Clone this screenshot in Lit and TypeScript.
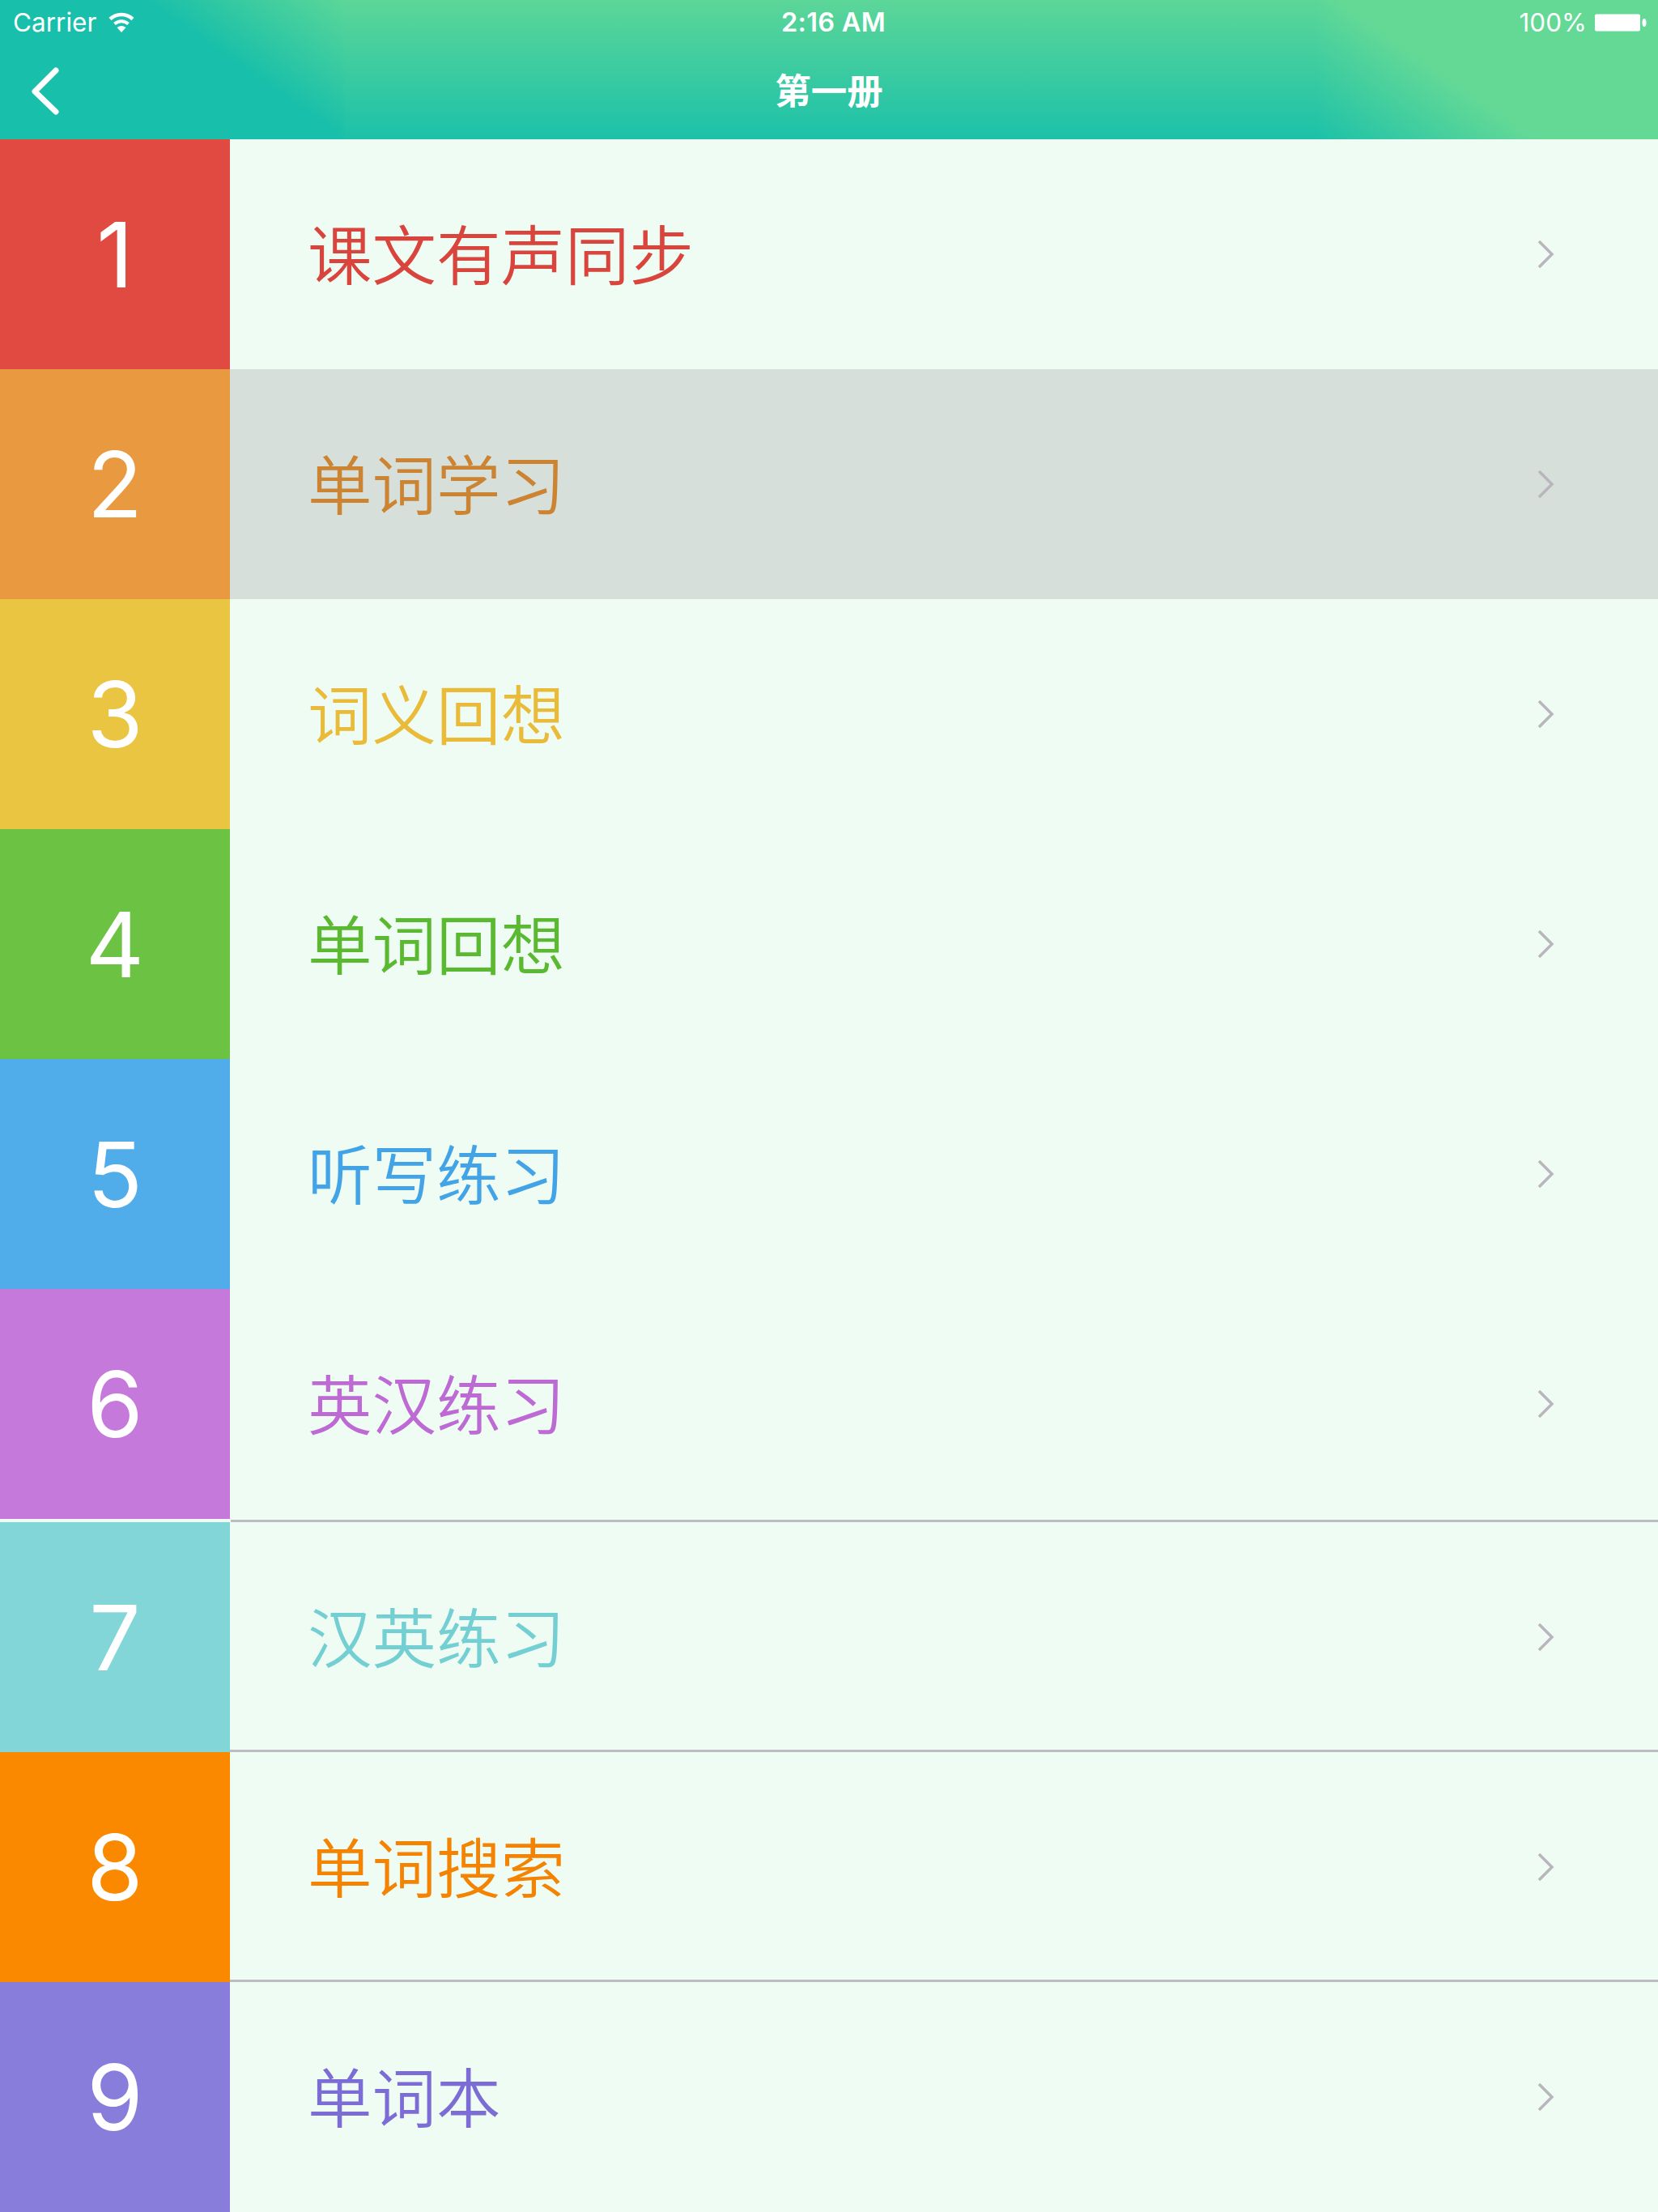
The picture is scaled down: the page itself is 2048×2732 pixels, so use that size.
import {css, html, LitElement, nothing} from "lit";
import {customElement, property, state} from "lit/decorators.js";
import {classMap} from "lit/directives/class-map.js";

interface Lesson {
  title: string;
  color: string;
  textColor: string;
  divider?: boolean;
}

const LESSONS: Lesson[] = [
  {title: "课文有声同步", color: "#e14a41", textColor: "#d9443c"},
  {title: "单词学习", color: "#e99a41", textColor: "#cc8432"},
  {title: "词义回想", color: "#eac541", textColor: "#e9bb38"},
  {title: "单词回想", color: "#6cc343", textColor: "#5ab931"},
  {title: "听写练习", color: "#51adea", textColor: "#42a3e6"},
  {title: "英汉练习", color: "#c57adb", textColor: "#bd6ad4"},
  {title: "汉英练习", color: "#83d6d8", textColor: "#74cfd2", divider: true},
  {title: "单词搜索", color: "#fb8900", textColor: "#f38300", divider: true},
  {title: "单词本", color: "#897ddc", textColor: "#7c6dd6"},
];

// the section line is drawn above this row
const SECTION_START = 6;

@customElement("status-bar")
export class StatusBar extends LitElement {

  static styles = css`
    :host {
      display: grid;
      grid-template-columns: 1fr auto 1fr;
      align-items: center;
      height: 56px;
      padding: 0 14px 0 16px;
      box-sizing: border-box;
      font-size: 31.5px;
      line-height: 56px;
      color: #fff;
    }

    .left,
    .right {
      display: flex;
      align-items: center;
    }

    .left {
      gap: 14px;
    }

    .right {
      justify-content: flex-end;
      gap: 8px;
    }

    .time {
      padding-left: 9px;
      font-size: 32.5px;
      font-weight: 600;
      letter-spacing: 0.3px;
    }

    svg {
      display: block;
    }
  `;

  render() {
    return html`
      <div class="left">
        <span>Carrier</span>
        <svg width="34" height="26" viewBox="0 0 34 26">
          <path d="M3 8.5C11 1 23 1 31 8.5" fill="none" stroke="#fff" stroke-width="4.5"/>
          <path d="M8.5 14.5C13.5 10 20.5 10 25.5 14.5" fill="none" stroke="#fff" stroke-width="4"/>
          <path d="M11.5 19Q17 15 22.5 19L17 25Z" fill="#fff"/>
        </svg>
      </div>
      <div class="time">2:16 AM</div>
      <div class="right">
        <span>100%</span>
        <svg width="66" height="24" viewBox="0 0 66 24">
          <rect x="2" y="1.5" width="56" height="21" rx="2" fill="#fff"/>
          <ellipse cx="63" cy="12" rx="2.5" ry="5" fill="#fff"/>
        </svg>
      </div>
    `;
  }
}

@customElement("lesson-row")
export class LessonRow extends LitElement {

  @property({type: Number})
  index: number = 1;

  @property({type: Object})
  lesson?: Lesson;

  @property({type: Boolean, reflect: true})
  selected: boolean = false;

  static styles = css`
    :host {
      display: flex;
      height: 284px;
    }

    .badge {
      flex: none;
      width: 284px;
      line-height: 285px;
      text-align: center;
      font-size: 112px;
      color: #fff;
    }

    .content {
      flex: 1;
      display: flex;
      align-items: center;
      justify-content: space-between;
      box-sizing: border-box;
      padding: 0 127px 0 96px;
    }

    .divider {
      box-shadow: inset 0 -3px #bdbcc2;
    }

    :host([selected]) .content {
      background: #d6dfd9;
    }

    .title {
      padding-bottom: 6px;
      font-family: "Noto Sans CJK SC", sans-serif;
      font-size: 79.5px;
      font-weight: 350;
      line-height: 278px;
      white-space: nowrap;
    }

    .arrow {
      display: block;
    }
  `;

  render() {
    if (!this.lesson) return nothing;
    const {title, color, textColor, divider} = this.lesson;
    return html`
      <div class="badge" style="background: ${color}">${this.index}</div>
      <div class=${classMap({content: true, divider: !!divider})}>
        <span class="title" style="color: ${textColor}">${title}</span>
        <svg class="arrow" width="22" height="36" viewBox="0 0 22 36">
          <path d="M2 2L18 18L2 34" fill="none" stroke="#b8b6bc" stroke-width="3.5"/>
        </svg>
      </div>
    `;
  }
}

@customElement("app-root")
export class AppRoot extends LitElement {

  @state()
  private selected = 1;

  static styles = css`
    :host {
      display: block;
      width: 2048px;
      height: 2732px;
      overflow: hidden;
      background: #eefcf4;
      font-family: Inter, "Noto Sans CJK SC", sans-serif;
    }

    /* Diagonal ends with a stretched vertical middle */
    .header {
      height: 172px;
      background:
        linear-gradient(34.7deg, #18bfaa 242px, #5fd897 392px) left / 425px 100% no-repeat,
        linear-gradient(34.7deg, #1cc1a9 0, #64d996 158px) right / 423px 100% no-repeat,
        linear-gradient(#5cd698, #1cc1a9);
    }

    .nav {
      display: grid;
      grid-template-columns: 1fr auto 1fr;
      align-items: center;
      height: 114px;
      color: #fff;
    }

    .back {
      display: block;
      margin-left: 37px;
    }

    .heading {
      font-size: 44.5px;
      font-weight: 600;
      line-height: 114px;
    }

    /* Gap above the rows that carry dividers */
    .section-gap {
      display: flex;
      align-items: center;
      height: 4px;
      padding-left: 285px;
    }

    .section-line {
      flex: 1;
      height: 3px;
      background: #bdbcc2;
    }
  `;

  private renderRow(lesson: Lesson, i: number) {
    return html`
      ${i === SECTION_START
          ? html`<div class="section-gap"><div class="section-line"></div></div>`
          : nothing}
      <lesson-row
          .index=${i + 1}
          .lesson=${lesson}
          ?selected=${i === this.selected}
          @click=${() => (this.selected = i)}
      ></lesson-row>
    `;
  }

  render() {
    return html`
      <div class="header">
        <status-bar></status-bar>
        <div class="nav">
          <svg class="back" width="38" height="60" viewBox="0 0 38 60">
            <path
                d="M32 4L6 30L32 55"
                fill="none"
                stroke="#fff"
                stroke-width="7"
                stroke-linecap="round"
                stroke-linejoin="round"
            />
          </svg>
          <div class="heading">第一册</div>
        </div>
      </div>
      ${LESSONS.map((lesson, i) => this.renderRow(lesson, i))}
    `;
  }
}

declare global {
  interface HTMLElementTagNameMap {
    "status-bar": StatusBar;
    "lesson-row": LessonRow;
    "app-root": AppRoot;
  }
}
